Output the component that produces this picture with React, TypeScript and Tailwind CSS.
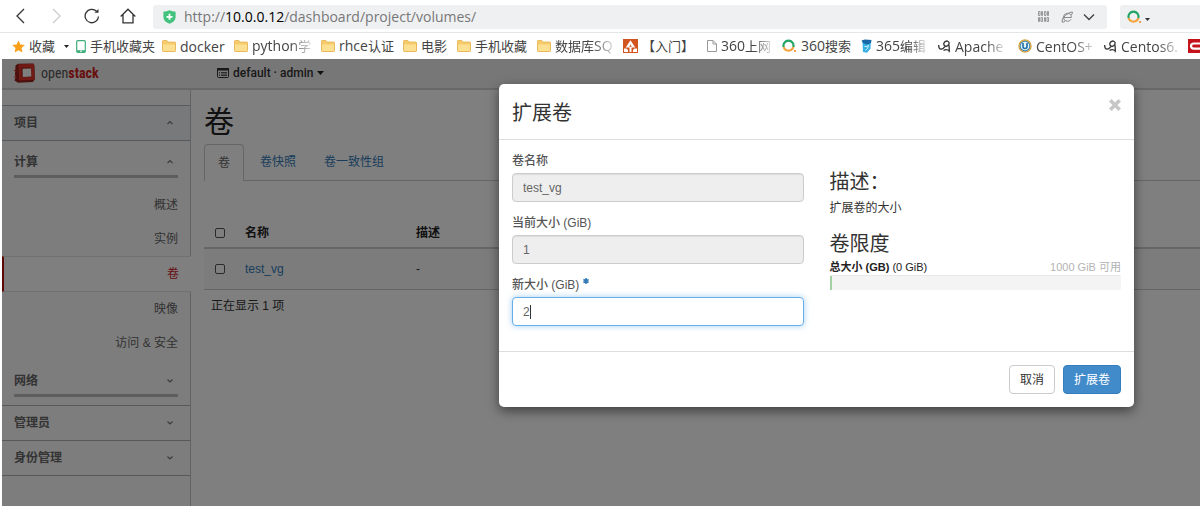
import type { ReactNode } from "react";

const uiFont = "font-['Liberation_Sans','Noto_Sans_CJK_SC',sans-serif]";
const chromeFont = "font-['Open_Sans','Noto_Sans_CJK_SC',sans-serif]";

/* ---------- browser icons ---------- */

function Folder() {
  return (
    <svg viewBox="0 0 14 12" className="h-3 w-3.5">
      <path d="M.5 1.200Q.5.5 1.200.5h3.600l1.400 1.600h6.600q.7 0 .7.7v8q0 .7-.7.7H1.200q-.7 0-.7-.7z" fill="#f5cb6c" stroke="#e9b95c" />
      <path d="M1 4.500h12v6.500H1z" fill="#fddf92" />
    </svg>
  );
}

function Phone() {
  return (
    <svg viewBox="0 0 10 13" className="h-[13px] w-2.5">
      <rect x=".7" y=".7" width="8.600" height="11.600" rx="1" fill="#fff" stroke="#3fae7c" strokeWidth="1.200" />
      <path d="M1 10.200h8v2H1z" fill="#3fae7c" />
      <path d="M4 11.200h2" stroke="#fff" />
    </svg>
  );
}

function Star() {
  return (
    <svg viewBox="0 0 13 13" className="h-[13px] w-[13px]">
      <path d="M6.500.4l1.900 4.100 4.400.5-3.300 3 .9 4.500-3.900-2.200-3.900 2.200.9-4.500-3.300-3 4.400-.5z" fill="#f9a01b" />
    </svg>
  );
}

function UpArrowTile() {
  return (
    <svg viewBox="0 0 15 14" className="h-3.5 w-[15px]">
      <path d="M0 0h15v14H0z" fill="#d2541f" />
      <path d="M7.500 1.200l4.800 7.300H2.700z" fill="#fff" />
      <path d="M7.500 5.500l1.300 2.300H6.200z" fill="#d2541f" />
      <path d="M6.500 8h2v5h-2zM1 9.500h2.500L5 11v2H1zM14 9.500h-2.500L10 11v2h4z" fill="#fff" />
    </svg>
  );
}

function PageIcon() {
  return (
    <svg viewBox="0 0 10 12" className="h-3 w-2.5">
      <path d="M.5.500h5.500l3.500 3.500v7.500h-9zM6 .5V4h3.500" fill="#fff" stroke="#999" />
    </svg>
  );
}

function SearchRing() {
  return (
    <svg viewBox="0 0 15 14" className="h-3.5 w-[15px]">
      <path d="M1.700 8A5 5 0 1 1 11.300 8" fill="none" stroke="#22a565" strokeWidth="2.200" />
      <path d="M1.700 8A5 5 0 0 0 11.300 8" fill="none" stroke="#f6a13a" strokeWidth="2.200" />
      <circle cx="13" cy="12" r="1.100" fill="#f08a24" />
    </svg>
  );
}

function BlueBook() {
  return (
    <svg viewBox="0 0 11 14" className="h-3.5 w-[11px]">
      <path d="M1.500 2.500L9.800 1.500 9.500 9.500 6 13.700 2 13z" fill="#35aee4" />
      <path d="M.5 1.500l3.500-1 6.500.5-.5 3-4 1.500-4-1.500z" fill="#1667a5" />
      <path d="M3.500 7.500q3 1 4-1.500-.2 4-3 5.500" fill="none" stroke="#d5f1fc" />
    </svg>
  );
}

function Scribble() {
  return (
    <svg viewBox="0 0 13 13" className="h-[13px] w-[13px]" fill="none" stroke="#333" strokeWidth="1.300">
      <path d="M.7 5Q.5 9 3 9.200 5.500 9 7.500 5.500M8 6.500Q5.500 6 5.800 3.200 6.800.800 9.300 1 11.800 1.800 10.800 4.300 9.800 6.200 8 6.500M10.800 4.300Q11.500 8 11.200 12.300M5.500 10.500Q8.500 8.500 11.500 11" />
    </svg>
  );
}

function PowerBadge() {
  return (
    <svg viewBox="0 0 14 14" className="h-3.5 w-3.5">
      <circle cx="7" cy="7" r="6" fill="#3787b8" stroke="#d9a94e" strokeWidth="1.500" />
      <circle cx="7" cy="7" r="4.300" fill="#e7f3fa" />
      <path d="M5 4v3.500a2 2 0 0 0 4 0V4" fill="none" stroke="#1b6ca8" strokeWidth="1.600" />
    </svg>
  );
}

function RedC() {
  return (
    <svg viewBox="0 0 14 14" className="h-3.5 w-3.5">
      <path d="M0 0h14v14H0z" fill="#c5131b" />
      <path d="M14 4.500H6Q3 4.500 3 7t3 2.700h8" fill="none" stroke="#fff" strokeWidth="2.200" />
    </svg>
  );
}

/* ---------- browser chrome ---------- */

function MixedText({ text }: { text: string }) {
  return (
    <>
      {text.split(/([\u3000-\u9fff]+)/).map((part, i) =>
        i % 2 ? (
          <span key={i} className="text-[13px]">{part}</span>
        ) : (
          part
        ),
      )}
    </>
  );
}

type Mark = { icon: ReactNode; text: string; size: string; fade?: boolean };

const marks: Mark[] = [
  { icon: <Phone />, text: "手机收藏夹", size: "w-[86px]" },
  { icon: <Folder />, text: "docker", size: "w-[72px]" },
  { icon: <Folder />, text: "python学", size: "w-[87px]", fade: true },
  { icon: <Folder />, text: "rhce认证", size: "w-[82px]" },
  { icon: <Folder />, text: "电影", size: "w-[54px]" },
  { icon: <Folder />, text: "手机收藏", size: "w-[80px]" },
  { icon: <Folder />, text: "数据库SQ", size: "w-[86px]", fade: true },
  { icon: <UpArrowTile />, text: "【入门】", size: "w-[84px]" },
  { icon: <PageIcon />, text: "360上网", size: "w-[75px]", fade: true },
  { icon: <SearchRing />, text: "360搜索", size: "w-[79px]" },
  { icon: <BlueBook />, text: "365编辑", size: "w-[77px]", fade: true },
  { icon: <Scribble />, text: "Apache", size: "w-[80px]", fade: true },
  { icon: <PowerBadge />, text: "CentOS+", size: "w-[86px]", fade: true },
  { icon: <Scribble />, text: "Centos6.", size: "w-[84px]", fade: true },
  { icon: <RedC />, text: "", size: "w-4" },
];

function Toolbar() {
  return (
    <div className="flex h-[33px] items-center border-b border-[#e6e6e6] pl-3">
      <div className="flex items-center gap-5">
        <button aria-label="后退">
          <svg viewBox="0 0 16 16" className="h-4 w-4" fill="none" stroke="#333" strokeWidth="1.300"><path d="M12 1L5 8l7 7" /></svg>
        </button>
        <button aria-label="前进">
          <svg viewBox="0 0 16 16" className="h-4 w-4" fill="none" stroke="#ccc" strokeWidth="1.300"><path d="M5 1l7 7-7 7" /></svg>
        </button>
        <button aria-label="刷新">
          <svg viewBox="0 0 16 16" className="h-4 w-4" fill="none" stroke="#333" strokeWidth="1.300">
            <path d="M14.500 8.500A6.700 6.700 0 1 1 12.500 3.200" />
            <path d="M10.500 4.800h4V1z" fill="#333" stroke="none" />
          </svg>
        </button>
        <button aria-label="主页">
          <svg viewBox="0 0 16 16" className="h-4 w-4" fill="none" stroke="#333" strokeWidth="1.300"><path d="M.7 8.500L8 1.200l7.300 7.300M3 6.800V14.800H13V6.800" /></svg>
        </button>
      </div>
      <div className="ml-[17px] mt-px flex h-6 flex-1 items-center rounded-[3px] bg-[#eff0f2] pl-2.5 pr-3">
        <svg viewBox="0 0 13 14" className="h-3.5 w-[13px]">
          <path d="M6.500.3Q9 1.700 12.600 1.700V7q0 4.500-6.100 6.800Q.4 11.500.4 7V1.700Q4 1.700 6.500.3z" fill="#41c27d" />
          <path d="M6.500 3.800v6M3.500 6.800h6" stroke="#fff" strokeWidth="1.800" />
        </svg>
        <span className="ml-2 flex-1 text-[14px] text-[#777]">
          http://<span className="text-black">10.0.0.12</span>/dashboard/project/volumes/
        </span>
        <svg viewBox="0 0 11 11" className="h-[11px] w-[11px]" fill="none" stroke="#999">
          <path d="M.5.500h1.500v4H.5zM3.500.500h1v4h-1zM6.500.500h1.500v4H6.500zM9.500.500h1v4h-1zM.5 6.500h1v4h-1zM3 6.500h1.500v4H3zM6.500 6.500h1v4h-1zM9 6.500h1.500v4H9z" />
        </svg>
        <svg viewBox="0 0 12 12" className="ml-3 h-3 w-3" fill="none" stroke="#888">
          <path d="M2.500 6.500h7.800Q10.500 2.500 6.500 2.300 2.500 2.500 2.300 6.500 2.800 10 6.300 10.300 9 10.300 10 8.300M1 11Q.3 8 4.500 4.300 8.500.800 11.300 1 12 2 10.300 4M1 11q1.300.6 3-.7" />
        </svg>
        <svg viewBox="0 0 12 8" className="ml-2.5 h-2 w-3" fill="none" stroke="#444" strokeWidth="1.400"><path d="M1 1.500l5 5 5-5" /></svg>
      </div>
      <div className="ml-[13px] mt-px flex h-6 w-20 items-center gap-[3px] rounded-l-[3px] bg-[#eff0f2] pl-[7px]">
        <SearchRing />
        <svg viewBox="0 0 5 9" className="h-[9px] w-[5px]"><path d="M0 6h5L2.500 9z" fill="#333" /></svg>
      </div>
    </div>
  );
}

function Bookmarks() {
  return (
    <div className="flex h-[26px] items-center overflow-hidden whitespace-nowrap pl-3 text-[14px] text-[#444]">
      <div className="flex w-16 shrink-0 items-center">
        <Star />
        <a href="#" className="ml-1"><MixedText text="收藏" /></a>
        <svg viewBox="0 0 5 3" className="ml-[9px] h-[3px] w-[5px] shrink-0"><path d="M0 0h5L2.500 3z" fill="#222" /></svg>
      </div>
      {marks.map((m, i) => (
        <a key={i} href="#" className={"flex shrink-0 items-center gap-1 " + m.size}>
          <span className="shrink-0">{m.icon}</span>
          <span className={m.fade ? "shrink-0 [mask-image:linear-gradient(to_right,black_65%,#0003)]" : ""}>
            <MixedText text={m.text} />
          </span>
        </a>
      ))}
    </div>
  );
}

/* ---------- dashboard ---------- */

function Chevron({ up }: { up?: boolean }) {
  return (
    <svg viewBox="0 0 8 8" className="h-2 w-2" fill="none" stroke="#777" strokeWidth="1.200">
      <path d={up ? "M1.500 5l2.500-2.500 2.500 2.500" : "M1.500 2.500l2.500 2.500 2.500-2.500"} />
    </svg>
  );
}

function Header() {
  return (
    <header className="flex h-[31px] border-b-2 border-[#d0d0d0] bg-[#eee] pl-3">
      <a href="#" className="flex h-7 w-[203px] items-center gap-1.5">
        <svg viewBox="0 0 21 20" className="h-5 w-[21px]">
          <path d="M1.500 2.500L4 .800 19 .5l1.500 2 .3 14-2 2.500L4 19.800.5 17.500l1-3-.5-3z" fill="#96201a" />
          <path d="M4.500 1.200L20 .800l.5 16-15.500.7z" fill="#e0352b" />
          <path d="M7.300 4.800l9.700-.3.3 9.500-9.500.3z" fill="#a32018" />
          <path d="M8.500 5.800l8.500-.3.300 8-8.500.5z" fill="#fff" />
          <path d="M0 7.500h2.500M0 14h2.500" stroke="#e0352b" />
        </svg>
        <span className="font-['Roboto_Condensed','Open_Sans_Condensed','Liberation_Sans',sans-serif] text-[14px] leading-5 text-[#555]">
          open<span className="font-bold text-[#d0211c]">stack</span>
        </span>
      </a>
      <button className="flex h-7 items-center gap-1 font-['Roboto',sans-serif] text-[12px] font-medium text-[#333]">
        <svg viewBox="0 0 12 10" className="h-2.5 w-3">
          <rect x=".5" y=".5" width="11" height="9" rx="1" fill="none" stroke="#333" />
          <path d="M0 0h12v2.500H0z" fill="#333" />
          <path d="M2 4.500h1M4 4.500h6M2 6h1M4 6h6M2 7.500h1M4 7.500h6" stroke="#333" strokeWidth=".8" />
        </svg>
        default · admin
        <svg viewBox="0 0 7 4" className="h-1 w-[7px]"><path d="M0 0h7L3.500 4z" fill="#222" /></svg>
      </button>
    </header>
  );
}

function Group({ label, up }: { label: string; up?: boolean }) {
  return (
    <button className="mx-3 flex h-[30px] items-center justify-between border-b-[3px] border-[#bcbcbc] pr-1 font-bold">
      {label}
      <Chevron up={up} />
    </button>
  );
}

function Panel({ label, up }: { label: string; up?: boolean }) {
  return (
    <button
      className={
        "flex h-[35px] items-center justify-between border-b border-[#b0b0b0] pl-3 pr-4 font-bold " +
        (up ? "bg-[#f1f2f5]" : "")
      }
    >
      {label}
      <Chevron up={up} />
    </button>
  );
}

function Item({ label, active }: { label: string; active?: boolean }) {
  return (
    <a
      href="#"
      className={
        "flex items-center justify-end pr-3 " +
        (active ? "-mr-px h-9 border-y border-l-2 border-y-[#e2e2e2] border-l-[#b8120c] bg-white text-[#d0211c]" : "h-[34px]")
      }
    >
      {label}
    </a>
  );
}

function Sidebar() {
  return (
    <nav className="flex w-[189px] shrink-0 flex-col border-r border-[#c4c4c4] bg-[#fbfbfb] text-[12px] text-[#666]">
      <div className="h-4 border-b border-[#b8b8b8]" />
      <Panel label="项目" up />
      <div className="flex flex-col pt-[7px]">
        <Group label="计算" up />
      </div>
      <div className="flex flex-col pb-[7px] pt-2.5">
        <Item label="概述" />
        <Item label="实例" />
        <Item label="卷" active />
        <Item label="映像" />
        <Item label="访问 & 安全" />
      </div>
      <div className="flex flex-col border-b border-[#b0b0b0] pb-2">
        <Group label="网络" />
      </div>
      <Panel label="管理员" />
      <Panel label="身份管理" />
    </nav>
  );
}

function Check({ label }: { label: string }) {
  return (
    <input
      type="checkbox"
      aria-label={label}
      className="block h-2.5 w-2.5 appearance-none rounded-[2px] border border-[#555] bg-white"
    />
  );
}

function Volumes() {
  return (
    <main className="min-w-0 flex-1 pl-[13px] text-[12px] text-[#333]">
      <h1 className="pt-3.5 text-[30px] leading-9 text-[#222]">卷</h1>
      <div className="mt-1 flex h-[37px] items-stretch border-b border-[#ccc]">
        <a href="#" className="-mb-px flex items-center rounded-t border border-b-0 border-[#ccc] bg-white px-[13px] text-[#666]">卷</a>
        <a href="#" className="flex items-center pl-4 pr-3.5 text-[#337ab7]">卷快照</a>
        <a href="#" className="flex items-center px-3.5 text-[#337ab7]">卷一致性组</a>
      </div>
      <table className="mt-[38px] w-full table-fixed text-left">
        <thead>
          <tr className="h-[29px] border-b-2 border-[#ccc] text-[#222]">
            <th className="w-[41px] pl-[11px]"><Check label="全选" /></th>
            <th className="w-[171px]">名称</th>
            <th>描述</th>
          </tr>
        </thead>
        <tbody>
          <tr className="h-[41px] border-b border-[#ccc] bg-[#f9f9f9]">
            <td className="pl-[11px]"><Check label="test_vg" /></td>
            <td><a href="#" className="text-[#337ab7]">test_vg</a></td>
            <td>-</td>
          </tr>
        </tbody>
      </table>
      <p className="py-1.5 pl-[7px] leading-5">正在显示 1 项</p>
    </main>
  );
}

/* ---------- dialog ---------- */

function Field({ id, label, value, active }: { id: string; label: string; value: string; active?: boolean }) {
  return (
    <div className="flex flex-col gap-0.5">
      <label htmlFor={id} className="flex h-5 items-center gap-1 font-medium text-[#555]">
        {label}
        {active && (
          <svg viewBox="0 0 6 6" className="mb-2 h-1.5 w-1.5" stroke="#337ab7" strokeWidth="1.500"><path d="M3 0v6M.4 1.500l5.200 3M5.600 1.500l-5.200 3" /></svg>
        )}
      </label>
      <div className="relative">
        <input
          id={id}
          defaultValue={value}
          disabled={!active}
          className={
            "block h-[29px] w-full rounded border px-2.5 text-[#666] outline-none " +
            (active
              ? "border-[#66afe9] bg-white shadow-[0_0_6px_rgba(102,175,233,0.6)]"
              : "border-[#ccc] bg-[#eee] shadow-[inset_0_1px_1px_rgba(0,0,0,0.075)]")
          }
        />
        {active && <span className="absolute left-[18px] top-2 h-3.5 w-px bg-[#333]" />}
      </div>
    </div>
  );
}

function ExtendDialog() {
  return (
    <div
      role="dialog"
      aria-labelledby="dialog-title"
      className="w-[635px] max-w-full rounded-[5px] bg-white text-[12px] text-[#333] shadow-[0_4px_12px_rgba(0,0,0,0.5)]"
    >
      <div className="flex h-14 items-start justify-between border-b border-[#ddd] px-[13px] pt-4">
        <h2 id="dialog-title" className="text-[20px] leading-[26px]">扩展卷</h2>
        <button aria-label="关闭" className="-mt-px">
          <svg viewBox="0 0 12 12" className="h-3 w-3" stroke="#c6c6c6" strokeWidth="3.600"><path d="M1.300 1.300l9.400 9.400M10.700 1.300l-9.400 9.400" /></svg>
        </button>
      </div>
      <div className="grid grid-cols-2 gap-[26px] px-[13px] pb-[25px] pt-[11px]">
        <form className="flex flex-col gap-[11px]">
          <Field id="name" label="卷名称" value="test_vg" />
          <Field id="size" label="当前大小 (GiB)" value="1" />
          <Field id="new-size" label="新大小 (GiB)" value="2" active />
        </form>
        <section className="pt-[19px]">
          <h3 className="text-[20px] leading-6">描述：</h3>
          <p className="mt-1 leading-5">扩展卷的大小</p>
          <h3 className="mt-3.5 text-[20px] leading-6">卷限度</h3>
          <div className="mt-[3px] flex justify-between text-[11px] leading-4">
            <span className="text-[#222]"><strong>总大小 (GB)</strong> (0 GiB)</span>
            <span className="text-[#b3b3b3]">1000 GiB 可用</span>
          </div>
          <div className="h-[15px] rounded-[2px] border-t border-[#e8e8e8] bg-[#f4f4f4]">
            <div className="h-full w-0.5 bg-[#a3d3a3]" />
          </div>
        </section>
      </div>
      <div className="flex justify-end gap-2 border-t border-[#ddd] p-[13px]">
        <button className="h-[29px] rounded border border-[#ccc] bg-white px-2.5">取消</button>
        <button className="h-[29px] rounded border border-[#357ebd] bg-[#428bca] px-2.5 text-white">扩展卷</button>
      </div>
    </div>
  );
}

export default function App() {
  return (
    <div className="flex min-h-screen flex-col bg-white">
      <div className={chromeFont}>
        <Toolbar />
        <Bookmarks />
      </div>
      <div className={"relative ml-0.5 flex flex-1 flex-col " + uiFont}>
        <Header />
        <div className="flex flex-1">
          <Sidebar />
          <Volumes />
        </div>
        <div className="absolute inset-0 flex items-start justify-end bg-black/50 pr-[66px] pt-[25px]">
          <ExtendDialog />
        </div>
      </div>
    </div>
  );
}
